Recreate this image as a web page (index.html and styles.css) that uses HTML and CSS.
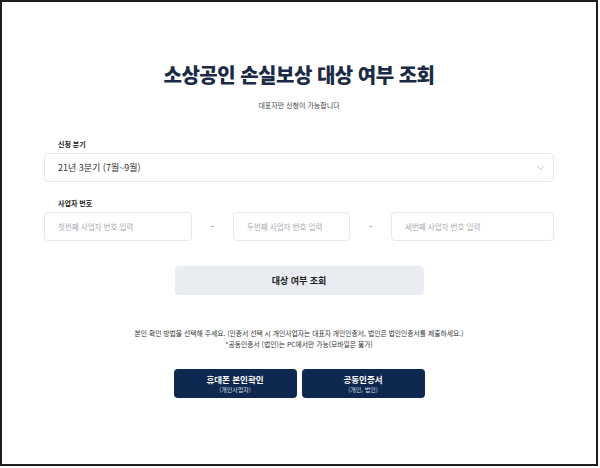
FILE: index.html
```html
<!DOCTYPE html>
<html lang="ko">
<head>
  <meta charset="utf8">
  <title>소상공인 손실보상 대상 여부 조회</title>
  <link rel="stylesheet" href="styles.css">
</head>
<body>

<div class="frame">
  <div class="page">
    <h1 class="title">소상공인 손실보상 대상 여부 조회</h1>
    <p class="sub">대표자만 신청이 가능합니다</p>

    <div class="field">
      <label class="field-label">신청 분기</label>
      <div class="select">
        <span>21년 3분기 (7월~9월)</span>
        <svg class="chev" width="9" height="6" viewBox="0 0 9 6"><path d="M1 1l3.5 3.5L8 1" fill="none" stroke="#c4c8ce" stroke-width="1"/></svg>
      </div>
    </div>

    <div class="field">
      <label class="field-label">사업자 번호</label>
      <div class="biz-row">
        <div class="input in-1">첫번째 사업자 번호 입력</div>
        <span class="dash">-</span>
        <div class="input in-2">두번째 사업자 번호 입력</div>
        <span class="dash">-</span>
        <div class="input in-3">세번째 사업자 번호 입력</div>
      </div>
    </div>

    <div class="check-wrap">
      <button class="check-btn">대상 여부 조회</button>
    </div>

    <div class="notice">
      <p>본인 확인 방법을 선택해 주세요. (인증서 선택 시 개인사업자는 대표자 개인인증서, 법인은 법인인증서를 제출하세요.)</p>
      <p>*공동인증서 (법인)는 PC에서만 가능(모바일은 불가)</p>
    </div>

    <div class="auth-row">
      <button class="auth-btn"><strong>휴대폰 본인확인</strong><small>(개인사업자)</small></button>
      <button class="auth-btn"><strong>공동인증서</strong><small>(개인, 법인)</small></button>
    </div>
  </div>
</div>

</body>
</html>
```

FILE: styles.css
```css
body { margin: 0; padding: 0; background: #fff; font-family: "Noto Sans CJK KR", "Noto Sans", sans-serif; }
.frame { box-sizing: border-box; width: 598px; height: 466px; border: 2px solid #1e1e1e; background: #fff; }
.page { width: 510px; margin: 0 auto; padding-top: 57px; }

.title { margin: 0; text-align: center; font-size: 20px; font-weight: 800; color: #1b2a46; letter-spacing: -0.5px; line-height: 32px; }
.sub { margin: 8px 0 0; text-align: center; font-size: 7px; color: #444; line-height: 12px; }

.field { margin-top: 27px; }
.field + .field { margin-top: 15px; }
.field-label { display: block; padding-left: 14px; font-size: 7px; font-weight: 700; color: #222; line-height: 12px; margin-bottom: 3px; }

.select { box-sizing: border-box; height: 29px; border: 1px solid #e6e8eb; border-radius: 4px; display: flex; align-items: center; justify-content: space-between; padding: 0 8px 0 13px; font-size: 9px; color: #333; }
.chev { display: block; }

.biz-row { display: flex; align-items: center; }
.input { box-sizing: border-box; height: 29px; border: 1px solid #e6e8eb; border-radius: 4px; display: flex; align-items: center; padding-left: 13px; font-size: 7.5px; color: #a7abb1; }
.in-1 { width: 148px; }
.in-2 { width: 117px; }
.in-3 { width: 163px; }
.dash { flex: 1; text-align: center; font-size: 9px; color: #666; }

.check-wrap { display: flex; justify-content: center; margin-top: 25px; }
.check-btn { width: 249px; height: 29px; border: 0; border-radius: 4px; background: #e9ecf0; font-family: inherit; font-size: 9px; font-weight: 700; color: #222; }

.notice { margin-top: 33px; text-align: center; font-size: 6.8px; color: #333; line-height: 11px; }
.notice p { margin: 0; }

.auth-row { display: flex; justify-content: center; gap: 5px; margin-top: 19px; }
.auth-btn { width: 123px; height: 29px; border: 0; border-radius: 4px; background: #0e2850; color: #fff; font-family: inherit; display: flex; flex-direction: column; align-items: center; justify-content: center; padding: 0; }
.auth-btn strong { font-size: 8.5px; line-height: 12px; }
.auth-btn small { font-size: 6px; line-height: 10px; color: #d5dbe6; }
```
